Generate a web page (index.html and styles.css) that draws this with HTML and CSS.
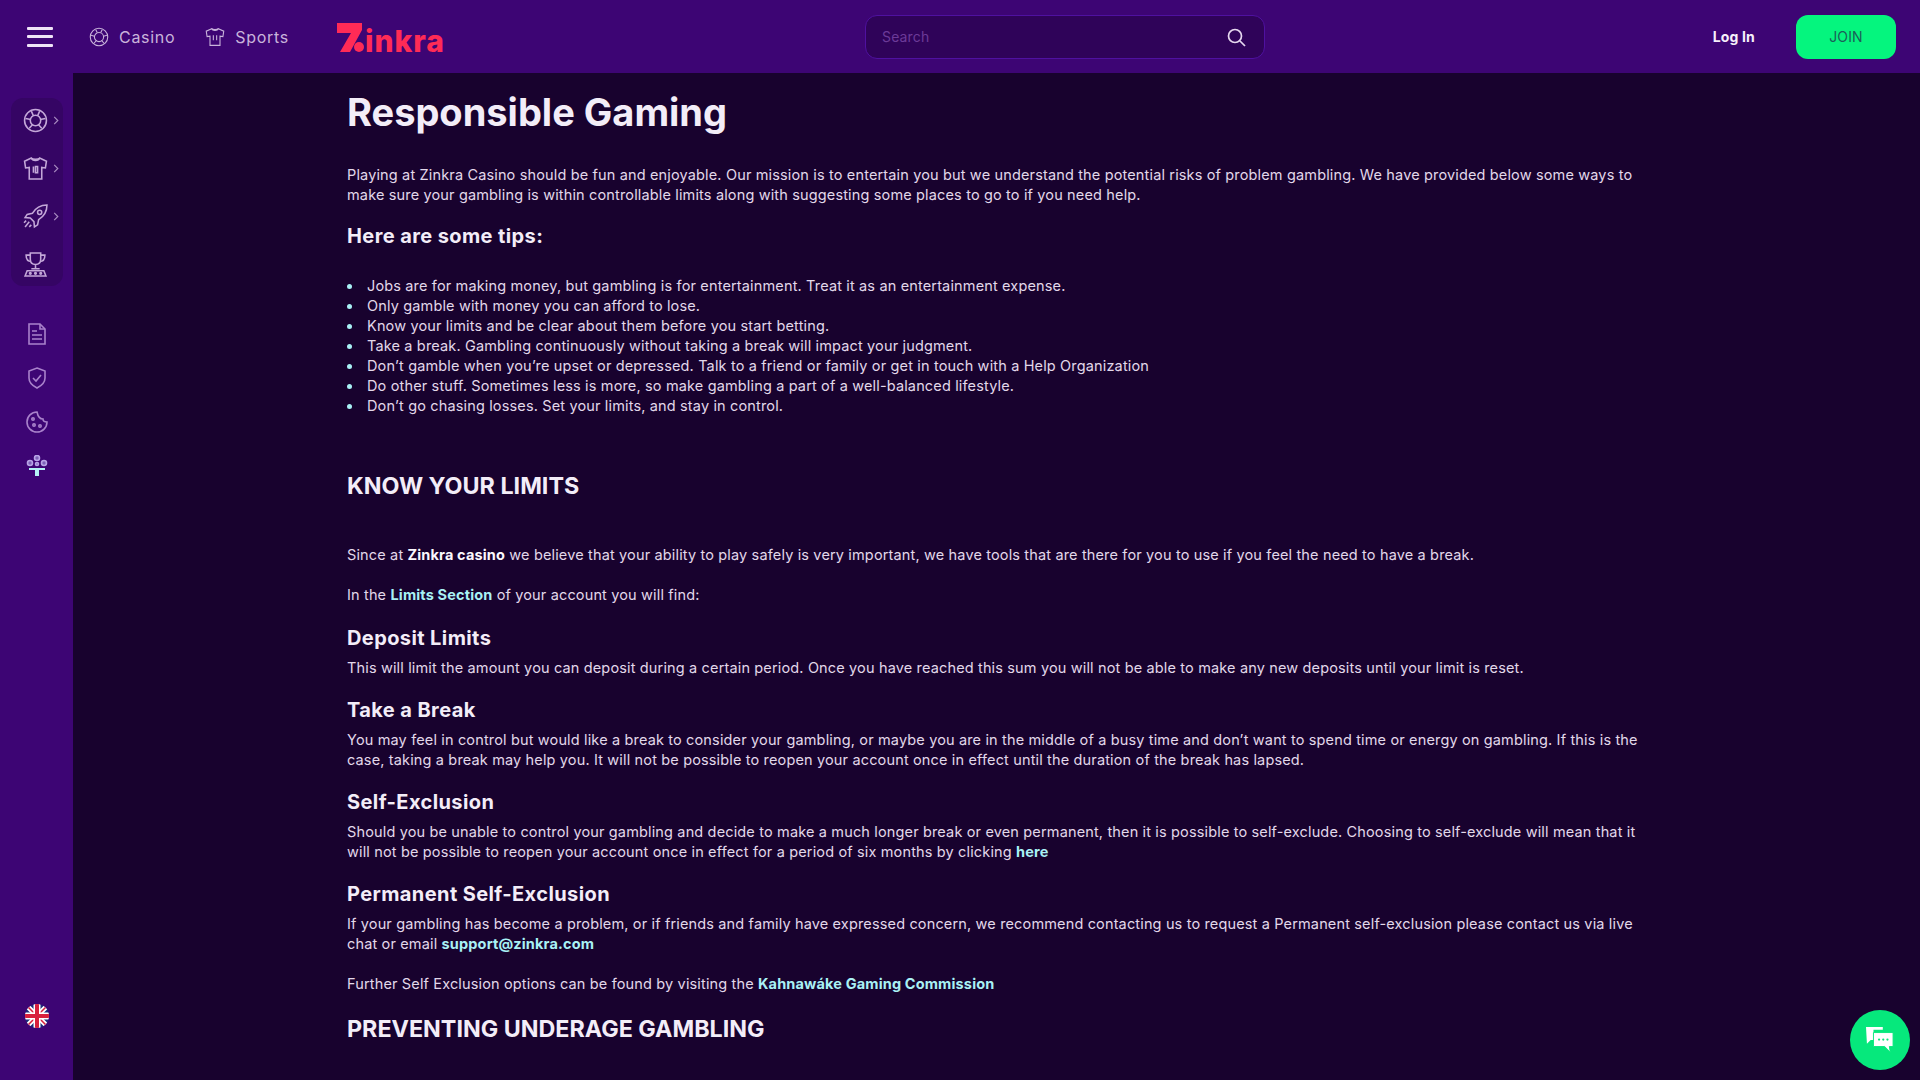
FILE: index.html
```html
<!DOCTYPE html>
<html lang="en">
<head>
    <meta charset="UTF-8">
    <meta name="viewport" content="width=device-width, initial-scale=1.0">
    <title>Responsible Gaming - Zinkra</title>
    <link rel="stylesheet" href="styles.css">
</head>
<body>
    <header class="topbar">
        <div class="topbar-left">
            <button class="burger" aria-label="Menu"><span></span><span></span><span></span></button>
            <a class="top-link" href="#">
                <svg class="top-icon" viewBox="0 0 24 24"><circle cx="12" cy="12" r="10.500"/><circle cx="12" cy="12" r="5.500"/><path d="M8 3l2 4M16 3l-2 4M2.500 10l4 1M21.500 10l-4 1M6 19.500l3-3.500M18 19.500l-3-3.500"/></svg>
                Casino
            </a>
            <a class="top-link" href="#">
                <svg class="top-icon" viewBox="0 0 24 24"><path d="M8 2L1.500 5l1 6.500 3.500-.5v11h12V11l3.500.5 1-6.500L16 2c-1 1.500-7 1.500-8 0z"/><path d="M8 2c1 3 7 3 8 0M10 10v6M14 10v6"/></svg>
                Sports
            </a>
            <a class="logo" href="#">
                <svg class="logo-mark" viewBox="0 0 28 30"><path d="M0 0h25v7L13 29H3l11-19H0z"/><circle cx="22" cy="24" r="5"/></svg><span class="logo-text">inkra</span>
            </a>
        </div>
        <div class="search">
            <span class="search-text">Search</span>
            <svg class="search-icon" viewBox="0 0 20 20"><circle cx="9" cy="9" r="6.500"/><path d="M14 14l5 5"/></svg>
        </div>
        <div class="topbar-right">
            <a class="login" href="#">Log In</a>
            <a class="join" href="#">JOIN</a>
        </div>
    </header>

    <div class="layout">
        <aside class="sidebar">
            <div class="side-group">
                <div class="side-item">
                    <svg class="side-icon" viewBox="0 0 24 24"><circle cx="12" cy="12" r="10.500"/><circle cx="12" cy="12" r="5"/><path d="M8 3l2 4.500M16 3l-2 4.500M2.500 10l5 1M21.500 10l-5 1M6 19.500l3.500-4M18 19.500l-3.500-4"/></svg>
                    <svg class="chevron" viewBox="0 0 6 10"><path d="M1 1l4 4-4 4"/></svg>
                </div>
                <div class="side-item">
                    <svg class="side-icon" viewBox="0 0 24 24"><path d="M8 2L1.500 5l1 6.500 3.500-.5v11h12V11l3.500.5 1-6.500L16 2c-1 1.500-7 1.500-8 0z"/><path d="M8 2c1 3 7 3 8 0M10 10v6M14 10v6h-2v-6z"/></svg>
                    <svg class="chevron" viewBox="0 0 6 10"><path d="M1 1l4 4-4 4"/></svg>
                </div>
                <div class="side-item">
                    <svg class="side-icon" viewBox="0 0 24 24"><path d="M23 1c-6 0-11 3-14 8l-5 1-2 3 5 .5 3.500 3.500.5 5 3-2 1-5c5-3 8-8 8-14z"/><circle cx="16" cy="8" r="2"/><path d="M6 17l-4 5M3 16l-2 2M8 20l-2 2"/></svg>
                    <svg class="chevron" viewBox="0 0 6 10"><path d="M1 1l4 4-4 4"/></svg>
                </div>
                <div class="side-item">
                    <svg class="side-icon" viewBox="0 0 24 24"><path d="M7 1h10v6c0 3-2 5-5 5s-5-2-5-5zM7 3H3c0 4 2 6 5 6M17 3h4c0 4-2 6-5 6M12 12v4M8 16h8M4 18h16l2 5H2z"/><circle cx="7" cy="20.500" r=".8"/><circle cx="12" cy="20.500" r=".8"/><circle cx="17" cy="20.500" r=".8"/></svg>
                </div>
            </div>
            <div class="side-links">
                <svg class="side-link-icon" viewBox="0 0 20 22"><path d="M2 1h11l5 5v15H2z"/><path d="M13 1v5h5M5 8h5M5 12h10M5 16h10"/></svg>
                <svg class="side-link-icon" viewBox="0 0 20 22"><path d="M10 1l8 3v7c0 5-4 8-8 10-4-2-8-5-8-10V4z"/><path d="M6 11l3 3 5-6"/></svg>
                <svg class="side-link-icon" viewBox="0 0 22 22"><path d="M11 1a10 10 0 1 0 10 10c-3 0-4-1-4-3-3 0-5-2-6-7z"/><circle cx="7" cy="8" r="1.200"/><circle cx="8" cy="14" r="1.200"/><circle cx="14" cy="15" r="1.200"/></svg>
                <svg class="side-link-icon gift" viewBox="0 0 22 22"><circle cx="11" cy="3" r="2.500"/><circle cx="4" cy="8" r="2.500"/><circle cx="18" cy="8" r="2.500"/><circle cx="11" cy="9" r="1.500"/><path class="gift-fill" d="M3 13h16v2h-6v6h-4v-6H3z"/></svg>
            </div>
            <svg class="flag" viewBox="0 0 24 24">
                <clipPath id="flag-clip"><circle cx="12" cy="12" r="12"/></clipPath>
                <g clip-path="url(#flag-clip)">
                    <rect width="24" height="24" fill="#1c2f7a"/>
                    <path d="M0 0l24 24M24 0L0 24" stroke="#fff" stroke-width="5"/>
                    <path d="M0 0l24 24M24 0L0 24" stroke="#d8203c" stroke-width="1.500"/>
                    <path d="M12 0v24M0 12h24" stroke="#fff" stroke-width="7"/>
                    <path d="M12 0v24M0 12h24" stroke="#d8203c" stroke-width="4"/>
                </g>
            </svg>
        </aside>

        <main class="content">
            <h1>Responsible Gaming</h1>
            <p class="intro">Playing at Zinkra Casino should be fun and enjoyable. Our mission is to entertain you but we understand the potential risks of problem gambling. We have provided below some ways to make sure your gambling is within controllable limits along with suggesting some places to go to if you need help.</p>
            <h3 class="tips-title">Here are some tips:</h3>
            <ul class="tips">
                <li>Jobs are for making money, but gambling is for entertainment. Treat it as an entertainment expense.</li>
                <li>Only gamble with money you can afford to lose.</li>
                <li>Know your limits and be clear about them before you start betting.</li>
                <li>Take a break. Gambling continuously without taking a break will impact your judgment.</li>
                <li>Don’t gamble when you’re upset or depressed. Talk to a friend or family or get in touch with a Help Organization</li>
                <li>Do other stuff. Sometimes less is more, so make gambling a part of a well-balanced lifestyle.</li>
                <li>Don’t go chasing losses. Set your limits, and stay in control.</li>
            </ul>
            <h2 class="limits-title">KNOW YOUR LIMITS</h2>
            <p class="after-title">Since at <strong>Zinkra casino</strong> we believe that your ability to play safely is very important, we have tools that are there for you to use if you feel the need to have a break.</p>
            <p>In the <a href="#">Limits Section</a> of your account you will find:</p>
            <h3>Deposit Limits</h3>
            <p>This will limit the amount you can deposit during a certain period. Once you have reached this sum you will not be able to make any new deposits until your limit is reset.</p>
            <h3>Take a Break</h3>
            <p>You may feel in control but would like a break to consider your gambling, or maybe you are in the middle of a busy time and don’t want to spend time or energy on gambling. If this is the case, taking a break may help you. It will not be possible to reopen your account once in effect until the duration of the break has lapsed.</p>
            <h3>Self-Exclusion</h3>
            <p>Should you be unable to control your gambling and decide to make a much longer break or even permanent, then it is possible to self-exclude. Choosing to self-exclude will mean that it will not be possible to reopen your account once in effect for a period of six months by clicking <a href="#">here</a></p>
            <h3>Permanent Self-Exclusion</h3>
            <p>If your gambling has become a problem, or if friends and family have expressed concern, we recommend contacting us to request a Permanent self-exclusion please contact us via live chat or email <a href="#">support@zinkra.com</a></p>
            <p class="further">Further Self Exclusion options can be found by visiting the <a href="#">Kahnawáke Gaming Commission</a></p>
            <h2 class="underage-title">PREVENTING UNDERAGE GAMBLING</h2>
        </main>
    </div>

    <button class="chat" aria-label="Chat">
        <svg viewBox="0 0 32 30"><path class="chat-back" d="M1 1h18v3H9v11H6l-4 4z"/><path class="chat-front" d="M9 7h21v15h-4l1 6-6-6H9z"/><circle class="chat-dot" cx="15" cy="14.500" r="1.200"/><circle class="chat-dot" cx="19.500" cy="14.500" r="1.200"/><circle class="chat-dot" cx="24" cy="14.500" r="1.200"/></svg>
    </button>
</body>
</html>
```

FILE: styles.css
```css
* {
    box-sizing: border-box;
}
html, body {
    height: 100%;
}
body {
    margin: 0;
    overflow: hidden;
    background-color: #18022e;
    color: #e2d8ea;
    font-family: Inter, "Open Sans", sans-serif;
    font-size: 14.5px;
    line-height: 20px;
    letter-spacing: 0.15px;
}
a {
    text-decoration: none;
}

/* top bar */
.topbar {
    height: 73px;
    padding: 0 24px 0 27px;
    display: flex;
    align-items: center;
    background-color: #3d0574;
}
.topbar-left {
    flex: 0 0 838px;
    display: flex;
    align-items: center;
}
.burger {
    width: 26px;
    height: 20px;
    padding: 0;
    margin-right: 36px;
    border: 0;
    background: none;
    display: flex;
    flex-direction: column;
    justify-content: space-between;
}
.burger span {
    height: 3px;
    background-color: #efe4f7;
    border-radius: 1px;
}
.top-link {
    display: flex;
    align-items: center;
    gap: 10px;
    margin-right: 30px;
    font-size: 16px;
    letter-spacing: 0.7px;
    color: #c9b4db;
}
.top-icon {
    width: 20px;
    height: 20px;
    fill: none;
    stroke: #c9b4db;
    stroke-width: 1.300;
}
.logo {
    display: flex;
    align-items: flex-end;
    margin: 3px 0 0 18px;
    color: #ff2b56;
}
.logo-mark {
    width: 28px;
    height: 30px;
    fill: #ff2b56;
}
.logo-text {
    font-size: 30px;
    font-weight: 800;
    line-height: 24px;
    letter-spacing: 1px;
}
.search {
    width: 400px;
    height: 44px;
    padding: 0 18px 0 16px;
    display: flex;
    align-items: center;
    justify-content: space-between;
    border: 1px solid #4f11a0;
    border-radius: 12px;
    background-color: #2f0359;
}
.search-text {
    font-size: 14px;
    color: #6c3a98;
}
.search-icon {
    width: 20px;
    height: 20px;
    fill: none;
    stroke: #e6d8ef;
    stroke-width: 1.700;
}
.topbar-right {
    margin-left: auto;
    display: flex;
    align-items: center;
}
.login {
    margin-right: 41px;
    font-size: 14px;
    font-weight: 700;
    color: #f6effa;
}
.join {
    width: 100px;
    height: 44px;
    display: flex;
    align-items: center;
    justify-content: center;
    border-radius: 12px;
    background-color: #05f57e;
    font-size: 14px;
    color: #1c5e58;
}

/* sidebar */
.layout {
    height: calc(100vh - 73px);
    display: flex;
}
.sidebar {
    flex: 0 0 73px;
    padding: 25px 0 52px;
    display: flex;
    flex-direction: column;
    align-items: center;
    background-color: #3d0574;
}
.side-group {
    width: 52px;
    margin-left: 1px;
    padding: 10px 0;
    display: flex;
    flex-direction: column;
    gap: 24px;
    border-radius: 12px;
    background-color: #350564;
}
.side-item {
    height: 24px;
    padding-left: 12px;
    display: flex;
    align-items: center;
    gap: 5px;
}
.side-icon {
    width: 25px;
    height: 25px;
    flex: none;
    fill: none;
    stroke: #c3a7d8;
    stroke-width: 1.500;
}
.chevron {
    width: 6px;
    height: 9px;
    fill: none;
    stroke: #a88cc0;
    stroke-width: 1.300;
}
.side-links {
    margin-top: 37px;
    display: flex;
    flex-direction: column;
    align-items: center;
    gap: 22px;
}
.side-link-icon {
    width: 22px;
    height: 22px;
    fill: none;
    stroke: #a982cb;
    stroke-width: 1.600;
}
.gift {
    stroke: #b8a4e6;
    fill: #7d62b8;
}
.gift-fill {
    fill: #b5f2f5;
    stroke: none;
}
.flag {
    width: 24px;
    height: 24px;
    margin-top: auto;
}

/* page text */
.content {
    flex: 1;
    padding: 19px 0 0 274px;
    overflow: hidden;
}
.content > * {
    max-width: 1300px;
}
h1 {
    margin: 0 0 33px;
    font-size: 38px;
    line-height: 40px;
    font-weight: 700;
    letter-spacing: 0;
    color: #f3edf8;
}
h2 {
    margin: 0;
    font-size: 23.3px;
    line-height: 30px;
    font-weight: 700;
    letter-spacing: 0;
    color: #f3edf8;
}
h3 {
    margin: 19px 0 7px;
    font-size: 20px;
    line-height: 26px;
    font-weight: 700;
    letter-spacing: 0.4px;
    color: #f3edf8;
}
p {
    margin: 0 0 20px;
}
h3 + p {
    margin-bottom: 0;
}
p a, p strong {
    font-weight: 700;
}
p strong {
    color: #fbf8fd;
}
p a {
    color: #a9f1f5;
}
.intro {
    margin-bottom: 0;
}
.further {
    margin-top: 20px;
}
.tips-title {
    margin: 18px 0 27px;
}
.tips {
    margin: 0;
    padding: 0 0 0 20px;
    list-style: none;
}
.tips li {
    position: relative;
}
.tips li::before {
    content: "";
    position: absolute;
    left: -20px;
    top: 8px;
    width: 5px;
    height: 5px;
    border-radius: 50%;
    background-color: #a9f1f5;
}
.limits-title {
    margin: 55px 0 44px;
}
.underage-title {
    margin-top: 16px;
}

/* chat bubble */
.chat {
    position: absolute;
    right: 10px;
    bottom: 10px;
    width: 60px;
    height: 60px;
    padding: 0;
    border: 0;
    border-radius: 50%;
    background-color: #06e87c;
    display: flex;
    align-items: center;
    justify-content: center;
}
.chat svg {
    width: 30px;
    height: 28px;
}
.chat-back, .chat-front {
    fill: #fff;
}
.chat-front {
    stroke: #06e87c;
    stroke-width: 1;
}
.chat-dot {
    fill: #06e87c;
}
```
